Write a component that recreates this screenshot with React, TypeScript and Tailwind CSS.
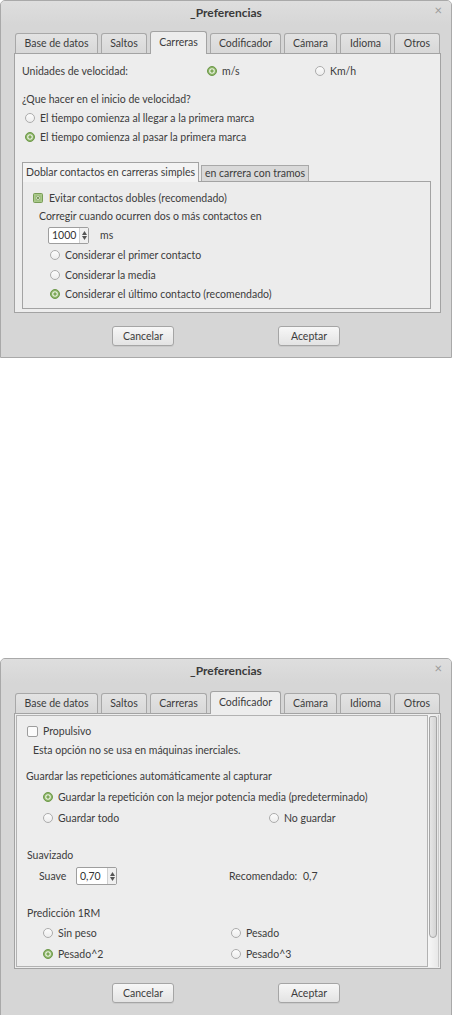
import React from "react";

const TXT = "text-[#3c3c3c]";

function Radio({ on }: { on?: boolean }) {
  if (on)
    return (
      <svg width="10" height="10" viewBox="0 0 10 10" className="shrink-0">
        <circle cx="5" cy="5" r="4.5" fill="#8cb468" stroke="#6e994a" strokeWidth="1" />
        <circle cx="5" cy="5" r="2.8" fill="#eef4e6" />
        <circle cx="5" cy="5" r="1.7" fill="#7ea858" />
      </svg>
    );
  return (
    <svg width="10" height="10" viewBox="0 0 10 10" className="shrink-0">
      <defs>
        <linearGradient id="rg" x1="0" y1="0" x2="0" y2="1">
          <stop offset="0" stopColor="#fdfdfd" />
          <stop offset="1" stopColor="#ececec" />
        </linearGradient>
      </defs>
      <circle cx="5" cy="5" r="4.5" fill="url(#rg)" stroke="#ababab" strokeWidth="1" />
    </svg>
  );
}

function Check({ on }: { on?: boolean }) {
  if (on)
    return (
      <svg width="10" height="10" viewBox="0 0 10 10" className="shrink-0">
        <rect x="0.5" y="0.5" width="9" height="9" rx="1" fill="#a9c98a" stroke="#789c57" />
        <rect x="3" y="3" width="4" height="4" fill="#dfead2" stroke="#8aaa6a" strokeWidth="0.6" />
        <path d="M3.6 3.6 L6.4 6.4 M6.4 3.6 L3.6 6.4" stroke="#5f8440" strokeWidth="0.8" />
      </svg>
    );
  return (
    <svg width="11" height="11" viewBox="0 0 11 11" className="shrink-0">
      <rect x="0.5" y="0.5" width="10" height="10" rx="1.5" fill="#fbfbfb" stroke="#9d9d9d" />
    </svg>
  );
}

function Spin({ value, w }: { value: string; w: number }) {
  return (
    <div
      className="flex h-full border border-[#9e9e9e] rounded-[2px] bg-white"
      style={{ width: w }}
    >
      <div className="flex-1 flex items-center pl-[3px] text-[#333]">{value}</div>
      <div className="w-[9px] flex flex-col items-center justify-center gap-[1px] bg-[#f0f0f0] border-l border-[#d0d0d0] text-[#555]">
        <svg width="5" height="4" viewBox="0 0 5 4"><path d="M2.5 0 L5 4 L0 4Z" fill="#555" /></svg>
        <svg width="5" height="4" viewBox="0 0 5 4"><path d="M0 0 L5 0 L2.5 4Z" fill="#555" /></svg>
      </div>
    </div>
  );
}

const TABS: [string, number][] = [
  ["Base de datos", 83],
  ["Saltos", 46],
  ["Carreras", 57],
  ["Codificador", 71],
  ["Cámara", 53],
  ["Idioma", 51],
  ["Otros", 46],
];

function Dialog({
  active,
  tabsPt,
  panelH,
  btnMt,
  children,
}: {
  active: number;
  tabsPt: number;
  panelH: number;
  btnMt: number;
  children: React.ReactNode;
}) {
  return (
    <div className="w-[452px] h-[358px] shrink-0 flex flex-col border border-[#a9a9a9] rounded-t-[5px] bg-[#d6d6d6] overflow-hidden">
      <div className="h-[24px] shrink-0 relative flex items-center justify-center bg-gradient-to-b from-[#dedede] to-[#d6d6d6]">
        <span className="font-bold text-[12px] text-[#3a3a3a]">_Preferencias</span>
        <span className="absolute right-[9px] top-[3px] text-[13px] text-[#9a9a9a]">×</span>
      </div>
      <div style={{ paddingTop: tabsPt }} className="shrink-0">
        <div className="flex items-end h-[22px] pl-[14px] gap-[3px]">
          {TABS.map(([t, w], i) =>
            i === active ? (
              <div
                key={t}
                style={{ width: w }}
                className="h-[23px] -mb-px relative z-10 flex items-center justify-center border border-b-0 border-[#a3a3a3] rounded-t-[3px] bg-[#ededed] pb-[2px]"
              >
                {t}
              </div>
            ) : (
              <div
                key={t}
                style={{ width: w }}
                className="h-[20px] flex items-center justify-center border border-b-0 border-[#a8a8a8] rounded-t-[3px] bg-gradient-to-b from-[#e3e3e3] to-[#d8d8d8]"
              >
                {t}
              </div>
            )
          )}
        </div>
        <div
          style={{ height: panelH }}
          className="ml-[13px] w-[427px] border border-[#a3a3a3] bg-[#ededed]"
        >
          {children}
        </div>
      </div>
      <div style={{ marginTop: btnMt }} className="flex pl-[111px] gap-[104px] shrink-0">
        {["Cancelar", "Aceptar"].map((b) => (
          <div
            key={b}
            className="w-[62px] h-[20px] flex items-center justify-center border border-[#a5a5a5] rounded-[3px] bg-gradient-to-b from-[#f7f7f7] to-[#e3e3e3] shadow-[0_1px_0_rgba(0,0,0,0.06)]"
          >
            {b}
          </div>
        ))}
      </div>
    </div>
  );
}

function Row({
  mt,
  pl,
  children,
  h = 16,
}: {
  mt: number;
  pl: number;
  children: React.ReactNode;
  h?: number;
}) {
  return (
    <div style={{ marginTop: mt, paddingLeft: pl, height: h }} className="flex items-center shrink-0">
      {children}
    </div>
  );
}

function RadioItem({ on, label, w }: { on?: boolean; label: string; w?: number }) {
  return (
    <div className="flex items-center gap-[5px]" style={w ? { width: w } : undefined}>
      <Radio on={on} />
      <span>{label}</span>
    </div>
  );
}

function Carreras() {
  return (
    <div className="flex flex-col">
      <Row mt={9} pl={7}>
        <span className="w-[185px]">Unidades de velocidad:</span>
        <div className="w-[108px]"><RadioItem on label="m/s" /></div>
        <RadioItem label="Km/h" />
      </Row>
      <Row mt={12} pl={7}>¿Que hacer en el inicio de velocidad?</Row>
      <Row mt={3} pl={10}><RadioItem label="El tiempo comienza al llegar a la primera marca" /></Row>
      <Row mt={3} pl={10}><RadioItem on label="El tiempo comienza al pasar la primera marca" /></Row>
      <div className="mt-[17px] ml-[7px]">
        <div className="flex items-end h-[19px] gap-[2px]">
          <div className="w-[177px] h-[20px] -mb-px relative z-10 flex items-center justify-center border border-b-0 border-[#a3a3a3] bg-[#f3f3f3]">
            Doblar contactos en carreras simples
          </div>
          <div className="w-[108px] h-[16px] flex items-center justify-center border border-b-0 border-[#a8a8a8] bg-[#d9d9d9]">
            en carrera con tramos
          </div>
        </div>
        <div className="w-[409px] h-[128px] border border-[#a3a3a3] bg-[#ececec] flex flex-col">
          <Row mt={8} pl={10}>
            <div className="flex items-center gap-[6px]"><Check on /><span>Evitar contactos dobles (recomendado)</span></div>
          </Row>
          <Row mt={2} pl={16}>Corregir cuando ocurren dos o más contactos en</Row>
          <Row mt={3} pl={25} h={17}>
            <Spin value="1000" w={41} />
            <span className="ml-[11px]">ms</span>
          </Row>
          <Row mt={3} pl={27}><RadioItem label="Considerar el primer contacto" /></Row>
          <Row mt={4} pl={27}><RadioItem label="Considerar la media" /></Row>
          <Row mt={3} pl={27}><RadioItem on label="Considerar el último contacto (recomendado)" /></Row>
        </div>
      </div>
    </div>
  );
}

function Codificador() {
  return (
    <div className="flex h-full p-[1px]">
      <div className="flex-1 border border-[#b2b2b2] bg-[#ededed] flex flex-col">
        <Row mt={7} pl={10}>
          <div className="flex items-center gap-[5px]"><Check /><span>Propulsivo</span></div>
        </Row>
        <Row mt={3} pl={16}>Esta opción no se usa en máquinas inerciales.</Row>
        <Row mt={10} pl={9}>Guardar las repeticiones automáticamente al capturar</Row>
        <Row mt={5} pl={26}><RadioItem on label="Guardar la repetición con la mejor potencia media  (predeterminado)" /></Row>
        <Row mt={5} pl={26}>
          <RadioItem label="Guardar todo" w={226} />
          <RadioItem label="No guardar" />
        </Row>
        <Row mt={21} pl={10}>Suavizado</Row>
        <Row mt={4} pl={22} h={18}>
          <span className="w-[37px]">Suave</span>
          <Spin value="0,70" w={41} />
          <span className="ml-[112px] w-[74px]">Recomendado:</span>
          <span>0,7</span>
        </Row>
        <Row mt={20} pl={10}>Predicción 1RM</Row>
        <Row mt={4} pl={26}>
          <RadioItem label="Sin peso" w={188} />
          <RadioItem label="Pesado" />
        </Row>
        <Row mt={5} pl={26}>
          <RadioItem on label="Pesado^2" w={188} />
          <RadioItem label="Pesado^3" />
        </Row>
      </div>
      <div className="w-[11px] bg-gradient-to-r from-[#f7f7f7] to-[#e8e8e8] border-r border-[#c8c8c8] pt-[1px] flex justify-center">
        <div className="w-[8px] h-[222px] border border-[#a6a6a6] rounded-b-[4px] rounded-t-[2px] bg-gradient-to-r from-[#e6e6e6] to-[#d4d4d4]" />
      </div>
    </div>
  );
}

export default function App() {
  return (
    <div className={`w-[452px] min-h-[1015px] bg-white flex flex-col gap-[300px] text-[10.5px] leading-none ${TXT} font-['Lato',sans-serif]`}>
      <Dialog active={2} tabsPt={6} panelH={260} btnMt={13}>
        <Carreras />
      </Dialog>
      <Dialog active={3} tabsPt={8} panelH={256} btnMt={14}>
        <Codificador />
      </Dialog>
    </div>
  );
}
